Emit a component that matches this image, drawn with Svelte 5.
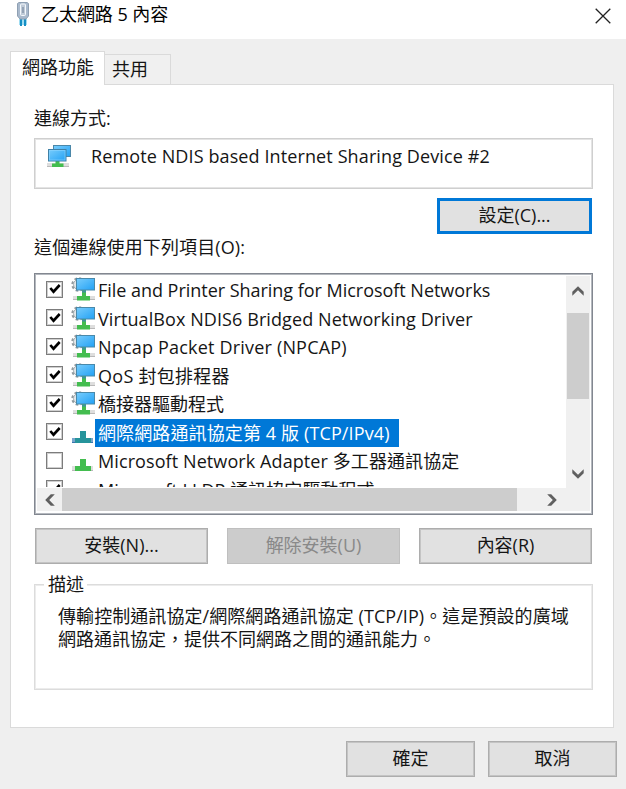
<script>
  const items = [
    { text: 'File and Printer Sharing for Microsoft Networks', icon: 'service', checked: true, ls: -0.03 },
    { text: 'VirtualBox NDIS6 Bridged Networking Driver', icon: 'service', checked: true, ls: 0.09 },
    { text: 'Npcap Packet Driver (NPCAP)', icon: 'service', checked: true, ls: 0.19 },
    { text: 'QoS 封包排程器', icon: 'service', checked: true, ls: 0.28 },
    { text: '橋接器驅動程式', icon: 'service', checked: true, ls: 0 },
    { text: '網際網路通訊協定第 4 版 (TCP/IPv4)', icon: 'protocol', checked: true, selected: true, ls: 0.12 },
    { text: 'Microsoft Network Adapter 多工器通訊協定', icon: 'protocol', checked: false, ls: 0.09 },
    { text: 'Microsoft LLDP 通訊協定驅動程式', icon: '', checked: true, ls: 0.05 }
  ];
</script>

{#snippet chevron(angle)}
  <svg width="14" height="14" viewBox="0 0 14 14" style:transform="rotate({angle}deg)">
    <path d="M1.300 7.800 7 2.200l5.700 5.600v4L7 6.200l-5.700 5.600z" fill="#606060" />
  </svg>
{/snippet}

<div class="dialog" lang="zh-Hant-TW">
  <header>
    <svg class="plug" width="14" height="25" viewBox="0 0 14 25">
      <path d="M3 17h8v6H3z" fill="#9edcf2" />
      <path d="M5 16v8M9 16v8" stroke="#168fc4" stroke-width="2" />
      <path d="M1.500 1.500 3 .5h8l1.500 1v12.500l-2.500 3H4l-2.500-3z" fill="#a9b9cc" stroke="#8fa0b3" />
      <rect x="4.500" y="2" width="5" height="11.500" rx="1" fill="#c0cbd8" stroke="#f4f8fb" />
      <path d="M6 5h2v6H6z" fill="#94a3b5" />
    </svg>
    <h1>乙太網路 5 內容</h1>
    <svg class="close" width="16" height="16" viewBox="0 0 16 16"><path d="m.7.7 14.600 14.600M15.300.7.7 15.300" stroke="#222" stroke-width="1.300" /></svg>
  </header>

  <nav>
    <div class="tab active">網路功能</div>
    <div class="tab">共用</div>
  </nav>

  <main>
    <div class="label first">連線方式:</div>
    <div class="adapter">
      <svg width="24" height="24" viewBox="0 0 24 24">
        <defs><linearGradient id="screen" x2="1" y2="1"><stop stop-color="#79cdfc" /><stop offset="1" stop-color="#22a1f5" /></linearGradient></defs>
        <path d="M0 19h22v4H0z" fill="#dedede" /><path d="M0 22.500h22" stroke="#bbb" />
        <path d="M8.500 16h4v3.500h4V23H5v-3.500h3.500z" fill="#43bd4f" />
        <rect x="6.500" y="1.500" width="17" height="11" fill="url(#screen)" stroke="#4b87a8" />
        <rect x="1.500" y="5.500" width="17.500" height="11.500" fill="url(#screen)" stroke="#3f80a5" />
        <rect x="2.500" y="6.500" width="15.500" height="9.500" fill="none" stroke="#8dd6ff" stroke-opacity=".6" />
      </svg>
      <span class="name">Remote NDIS based Internet Sharing Device #2</span>
    </div>
    <div class="configure"><button class="focus">設定(C)...</button></div>
    <div class="label second">這個連線使用下列項目(O):</div>

    <div class="list">
      <div class="upper">
        <div class="rows">
          {#each items as item}
            <div class="row">
              <span class="box">
                {#if item.checked}
                  <svg width="14" height="14" viewBox="0 0 14 14"><path d="m2.300 6 3.200 3.700L11.700 3" fill="none" stroke="#000" stroke-width="2.600" /></svg>
                {/if}
              </span>
              <svg class="icon" width="24" height="26" viewBox="0 0 24 26">
                {#if item.icon === 'service'}
                  <circle cx="7.500" cy="8.500" r="6" fill="none" stroke="#929b9f" stroke-width="2.400" stroke-dasharray="2.600 2.110" />
                  <circle cx="7.500" cy="8.500" r="5" fill="#e3e7e9" stroke="#a5aeb2" />
                  <path d="M2 20h22v4H2z" fill="#dedede" /><path d="M2 23.500h22" stroke="#b8b8b8" />
                  <path d="M11 14h4v6h4v4.500H6V20h5z" fill="#43bd4f" />
                  <rect x="5.500" y="2.500" width="18" height="11.500" fill="url(#screen)" stroke="#4989aa" />
                  <path d="M11 14.500h4v2h-4z" fill="#3f929c" />
                {:else if item.icon === 'protocol'}
                  <path d="M1 19h21v5H1z" fill={item.selected ? '#78a5cc' : '#dedede'} />
                  <path d="M1 23.500h21" stroke={item.selected ? '#3a75ae' : '#b8b8b8'} />
                  <path d="M9 12h6v7h5v5H4v-5h5z" fill={item.selected ? '#26949b' : '#43bd4f'} />
                {/if}
              </svg>
              <span class="text" class:selected={item.selected} style:letter-spacing="{item.ls}px">{item.text}</span>
            </div>
          {/each}
        </div>
        <div class="vbar">
          <div class="arrow">{@render chevron(0)}</div>
          <div class="vthumb"></div>
          <div class="arrow down">{@render chevron(180)}</div>
        </div>
      </div>
      <div class="hbar">
        <div class="arrow">{@render chevron(-90)}</div>
        <div class="hthumb"></div>
        <div class="arrow right">{@render chevron(90)}</div>
      </div>
    </div>

    <div class="actions">
      <button>安裝(N)...</button>
      <button disabled>解除安裝(U)</button>
      <button>內容(R)</button>
    </div>

    <section>
      <h2>描述</h2>
      <p><span class="l1">傳輸控制通訊協定/網際網路通訊協定 (TCP/IP)。這是預設的廣域</span><br />網路通訊協定，提供不同網路之間的通訊能力。</p>
    </section>
  </main>

  <footer>
    <button>確定</button>
    <button>取消</button>
  </footer>
</div>

<style>
  :global(body) { margin: 0; }
  .dialog {
    width: 626px; height: 789px; overflow: hidden; background: #efefef; color: #151515;
    font: 18px/24px 'Open Sans', 'Noto Sans CJK TC', sans-serif;
    display: flex; flex-direction: column;
  }
  .dialog, .dialog * { box-sizing: border-box; }
  svg { display: block; flex: none; }
  header { height: 39px; flex: none; background: #fff; display: flex; align-items: flex-start; padding: 2px 15px 0 16px; }
  h1 { margin: 0 auto 0 11px; font-size: 18px; font-weight: 400; line-height: 24px; white-space: nowrap; color: #000; letter-spacing: -0.06px; }
  .close { margin-top: 6px; }
  nav { height: 46px; flex: none; padding: 12px 0 0 10px; display: flex; align-items: flex-end; margin-bottom: -1px; z-index: 1; }
  .tab { height: 31px; width: 66px; border: 1px solid #dadada; border-left: 0; padding: 2px 7px; white-space: nowrap; background: #f0f0f0; line-height: 24px; }
  .tab.active { width: 95px; height: 34px; background: #fff; border: 1px solid #dadada; border-bottom: 0; padding: 3px 11px; }
  main { width: 604px; height: 644px; flex: none; margin-left: 10px; background: #fff; border: 1px solid #dadada; padding: 0 20px 0 23px; display: flex; flex-direction: column; }
  .label { height: 24px; flex: none; white-space: nowrap; }
  .first { margin-top: 21px; }
  .adapter { height: 51px; flex: none; margin-top: 8px; border: 1px solid #cfcfcf; box-shadow: inset 0 0 0 1px #e4e4e4; display: flex; padding: 5px 0 0 12px; }
  .name { margin-left: 20px; white-space: nowrap; line-height: 25px; letter-spacing: 0.11px; }
  .configure { display: flex; justify-content: flex-end; padding: 9px 1px 0 0; }
  button { margin: 0; padding: 0 0 2px; border: 1px solid #adadad; box-shadow: inset 0 0 0 1px #c4c4c4; background: #e1e1e1; height: 36px; font: inherit; color: #151515; white-space: nowrap; }
  button:disabled { background: #ccc; border-color: #bfbfbf; box-shadow: none; color: #898989; }
  .focus { width: 155px; border: 3px solid #0078d7; box-shadow: none; }
  .second { margin-top: 1px; letter-spacing: 0.13px; }
  .list { height: 242px; flex: none; margin-top: 14px; border: 1px solid #828790; box-shadow: inset 0 0 0 1px #b4b8be; padding: 2px; display: flex; flex-direction: column; }
  .upper { height: 212px; display: flex; flex: none; }
  .rows { width: 529px; height: 211px; flex: none; overflow: hidden; }
  .row { height: 28.500px; display: flex; align-items: center; padding-left: 9px; }
  .box { width: 17px; height: 17px; border: 1px solid #7c7c7c; box-shadow: inset 0 0 0 1px #cfcfcf; display: flex; align-items: center; justify-content: center; margin-top: -2px; }
  .icon { margin-left: 8px; margin-top: -2px; }
  .text { height: 28px; line-height: 28px; padding: 0 3px; white-space: nowrap; }
  .text.selected { background: #0078d7; color: #fff; width: 304px; }
  .vbar { width: 24px; background: #f0f0f0; display: flex; flex-direction: column; }
  .arrow { width: 24px; height: 24px; display: flex; align-items: center; justify-content: center; flex: none; }
  .vbar .arrow { height: 37px; padding-bottom: 8px; }
  .vthumb { height: 86px; margin: 0 1px; background: #cdcdcd; }
  .vbar .down { margin-top: auto; height: 28px; padding: 0; }
  .hbar { height: 23px; background: #f0f0f0; width: 553px; display: flex; }
  .hbar .arrow { width: 25px; }
  .hthumb { width: 455px; background: #cdcdcd; }
  .hbar .right { margin-left: 22px; }
  .actions { display: flex; justify-content: space-between; padding: 13px 1px 0; }
  .actions button { width: 173px; }
  section { height: 106px; flex: none; margin-top: 20px; border: 1px solid #dcdcdc; box-shadow: inset 0 0 0 1px #ececec; padding: 1px 0 0 23px; }
  h2 { width: 43px; height: 24px; margin: -14px 0 0 -14px; background: #fff; padding-left: 4px; font-size: 18px; font-weight: 400; line-height: 24px; white-space: nowrap; }
  p { margin: 9px 0 0; line-height: 23px; white-space: nowrap; }
  .l1 { letter-spacing: 0.07px; }
  footer { display: flex; justify-content: flex-end; gap: 13px; padding: 13px 9px 0 0; }
  footer button { width: 129px; }
</style>
